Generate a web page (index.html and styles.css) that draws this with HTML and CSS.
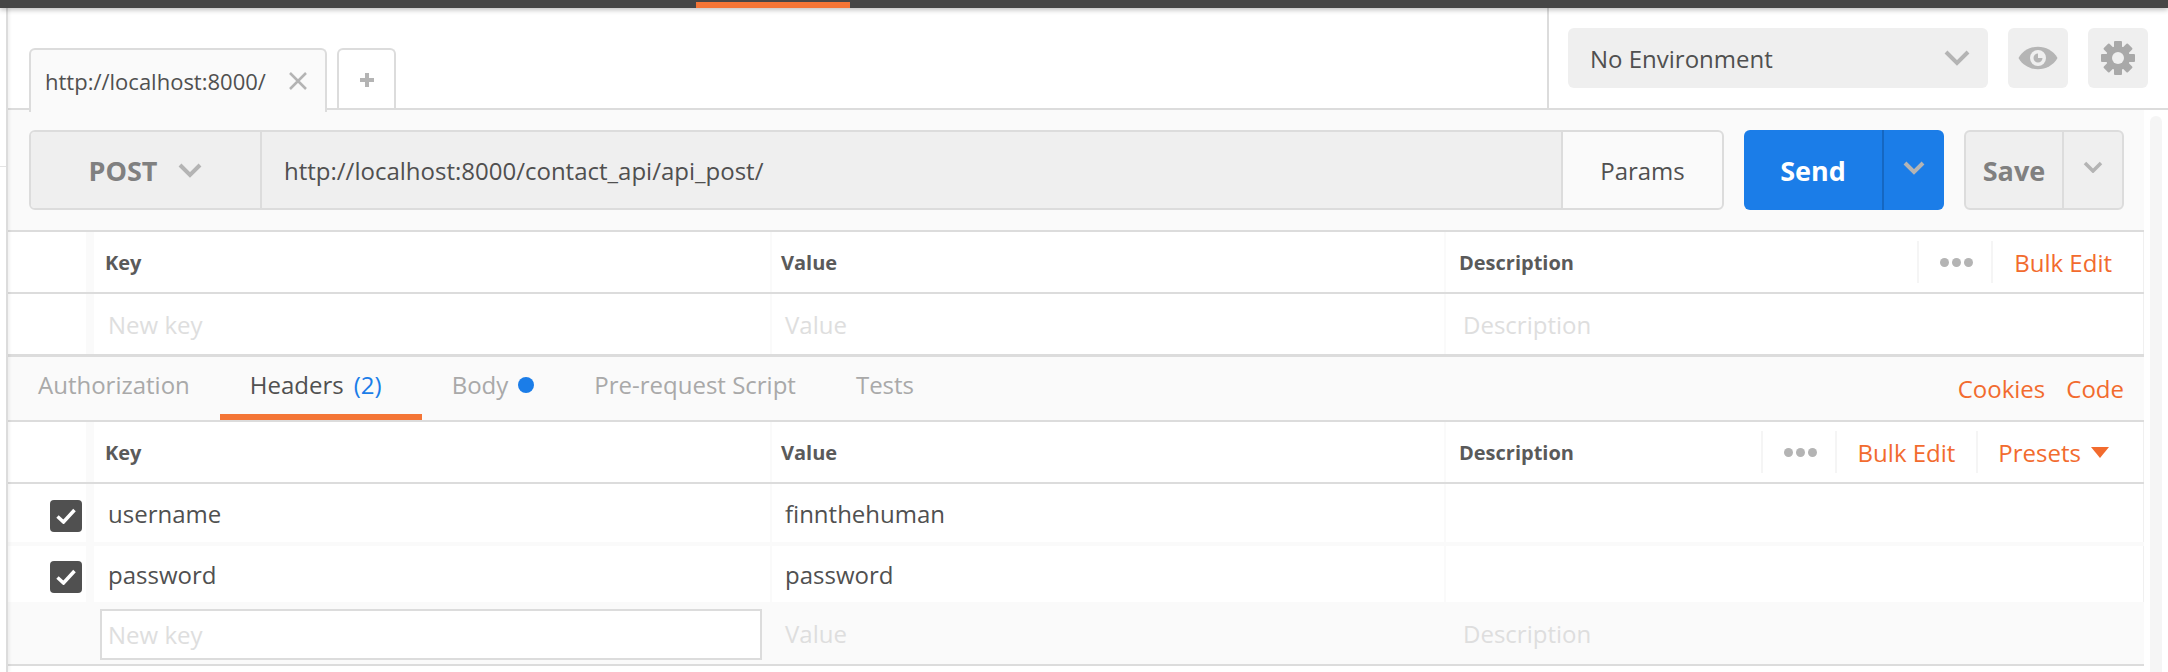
FILE: index.html
```html
<!DOCTYPE html>
<html lang="en">

<head>
  <meta charset="UTF-8">
  <meta name="viewport" content="width=device-width, initial-scale=1.0">
  <title>Postman - http://localhost:8000/</title>

  <link rel="stylesheet" href="styles.css">
</head>

<body>
  <div class="topbar"><div class="topbar-active"></div></div>

  <div class="app">
    <aside class="sidebar"><div class="sidebar-item"></div></aside>

    <div class="content">
      <header class="tabs-row">
        <div class="tab tab-active">
          <span class="tab-title">http://localhost:8000/</span>
          <svg class="tab-close" width="20" height="18" viewBox="0 0 20 18"><path d="M2 1 18 17M18 1 2 17"/></svg>
        </div>
        <div class="tab tab-add">
          <svg class="tab-plus" width="16" height="16" viewBox="0 0 16 16"><path d="M8 1V15M1 8H15"/></svg>
        </div>

        <div class="env-bar">
          <div class="env-select">
            <span>No Environment</span>
            <svg class="chevron chevron-big" width="26" height="16" viewBox="0 0 26 16"><path d="M2 2 13 13 24 2"/></svg>
          </div>
          <div class="env-btn">
            <svg width="40" height="24" viewBox="0 0 40 24">
              <path class="icon-fill" d="M0.500 12C9 -3 31 -3 39.500 12 31 27 9 27 0.500 12Z"/>
              <circle class="icon-hole" cx="20" cy="12" r="8"/>
              <path class="icon-fill" d="M20 7.500A4.500 4.500 0 1 0 24.500 12H20Z"/>
            </svg>
          </div>
          <div class="env-btn">
            <svg width="36" height="36" viewBox="0 0 36 36">
              <g class="icon-gear">
                <rect x="14" y="1" width="8" height="34" rx="1"/>
                <rect x="14" y="1" width="8" height="34" rx="1" transform="rotate(45 18 18)"/>
                <rect x="14" y="1" width="8" height="34" rx="1" transform="rotate(90 18 18)"/>
                <rect x="14" y="1" width="8" height="34" rx="1" transform="rotate(135 18 18)"/>
              </g>
              <circle class="icon-gear" cx="18" cy="18" r="12"/>
              <circle class="icon-hole" cx="18" cy="18" r="6"/>
            </svg>
          </div>
        </div>
      </header>

      <div class="workspace">
        <main class="main">
          <section class="request-bar">
            <div class="request-group">
              <div class="method">
                <span>POST</span>
                <svg class="chevron" width="24" height="15" viewBox="0 0 24 15"><path d="M2 2 12 12 22 2"/></svg>
              </div>
              <div class="url">http://localhost:8000/contact_api/api_post/</div>
              <div class="params">Params</div>
            </div>
            <div class="send">
              <span class="send-label">Send</span>
              <span class="send-arrow"><svg class="chevron" width="22" height="14" viewBox="0 0 22 14"><path d="M2 2 11 11 20 2"/></svg></span>
            </div>
            <div class="save">
              <span class="save-label">Save</span>
              <span class="save-arrow"><svg class="chevron chevron-thin" width="20" height="12" viewBox="0 0 20 12"><path d="M2 2 10 10 18 2"/></svg></span>
            </div>
          </section>

          <section class="kv-table">
            <div class="kv-row kv-head">
              <div class="cell cell-check"></div>
              <div class="cell cell-key">Key</div>
              <div class="cell cell-value">Value</div>
              <div class="cell cell-desc">
                <span>Description</span>
                <div class="head-actions">
                  <div class="head-action head-dots"><i></i><i></i><i></i></div>
                  <div class="head-action link">Bulk Edit</div>
                </div>
              </div>
            </div>
            <div class="kv-row kv-new-row">
              <div class="cell cell-check"></div>
              <div class="cell cell-key placeholder">New key</div>
              <div class="cell cell-value placeholder">Value</div>
              <div class="cell cell-desc placeholder">Description</div>
            </div>
          </section>

          <nav class="sub-tabs">
            <div class="sub-tab">Authorization</div>
            <div class="sub-tab sub-tab-active">Headers <span class="count">(2)</span></div>
            <div class="sub-tab sub-tab-body">Body <span class="dot"></span></div>
            <div class="sub-tab">Pre-request Script</div>
            <div class="sub-tab">Tests</div>
            <div class="sub-links">
              <span class="link">Cookies</span>
              <span class="link">Code</span>
            </div>
          </nav>

          <section class="kv-table">
            <div class="kv-row kv-head">
              <div class="cell cell-check"></div>
              <div class="cell cell-key">Key</div>
              <div class="cell cell-value">Value</div>
              <div class="cell cell-desc">
                <span>Description</span>
                <div class="head-actions head-actions-wide">
                  <div class="head-action head-dots"><i></i><i></i><i></i></div>
                  <div class="head-action link">Bulk Edit</div>
                  <div class="head-action link">Presets <span class="caret"></span></div>
                </div>
              </div>
            </div>
            <div class="kv-row kv-data">
              <div class="cell cell-check"><span class="check"><svg width="20" height="16" viewBox="0 0 20 16"><path d="M1.500 8.500 7.500 14 18.500 2"/></svg></span></div>
              <div class="cell cell-key">username</div>
              <div class="cell cell-value">finnthehuman</div>
              <div class="cell cell-desc"></div>
            </div>
            <div class="kv-row kv-data">
              <div class="cell cell-check"><span class="check"><svg width="20" height="16" viewBox="0 0 20 16"><path d="M1.500 8.500 7.500 14 18.500 2"/></svg></span></div>
              <div class="cell cell-key">password</div>
              <div class="cell cell-value">password</div>
              <div class="cell cell-desc"></div>
            </div>
            <div class="kv-row kv-focus">
              <div class="cell cell-check"></div>
              <div class="cell cell-key placeholder"><div class="key-input">New key</div></div>
              <div class="cell cell-value placeholder">Value</div>
              <div class="cell cell-desc placeholder">Description</div>
            </div>
          </section>
        </main>

        <div class="gutter"><div class="scrollbar"></div></div>
      </div>
    </div>
  </div>
</body>

</html>
```

FILE: styles.css
```css
* {
  box-sizing: border-box;
}

html,body {
  margin: 0;
  height: 672px;
  overflow: hidden;
}

body {
  background-color: #fff;
  color: #505050;
  font-family: "Open Sans", "Liberation Sans", sans-serif;
  font-size: 24px;
}

.topbar {
  position: relative;
  z-index: 2;
  height: 8px;
  padding: 2px 0 0 696px;
  background-color: #464646;
  box-shadow: 0 2px 5px rgba(0,0,0,0.25);
}

.topbar-active {
  width: 154px;
  height: 6px;
  background-color: #f47536;
}

.app {
  display: flex;
  height: 664px;
}

.sidebar {
  position: relative;
  z-index: 1;
  width: 8px;
  border-right: 2px solid #dcdcdc;
  box-shadow: 2px 0 3px rgba(0,0,0,0.05);
  flex-shrink: 0;
}

.sidebar-item {
  height: 159px;
  border-bottom: 1px solid #e4e4e4;
}

.content {
  flex: 1;
  min-width: 0;
}

.tabs-row {
  display: flex;
  height: 102px;
  padding-left: 21px;
  border-bottom: 2px solid #dcdcdc;
}

.tab {
  display: flex;
  align-items: center;
  height: 62px;
  margin-top: 40px;
  border: 2px solid #dcdcdc;
  border-bottom: 0;
  border-radius: 6px 6px 0 0;
}

.tab-active {
  width: 298px;
  padding: 0 17px 0 14px;
  background-color: #fafafa;
  position: relative;
  z-index: 1;
  justify-content: space-between;
  height: 64px;
  font-size: 22px;
}

.tab-add {
  width: 59px;
  margin-left: 10px;
  justify-content: center;
}

.tab-close path {
  fill: none;
  stroke: #b4b4b4;
  stroke-width: 2.500;
}

.tab-plus path {
  fill: none;
  stroke: #b4b4b4;
  stroke-width: 4;
}

.env-bar {
  display: flex;
  gap: 20px;
  width: 621px;
  margin-left: auto;
  padding: 20px 0 0 19px;
  border-left: 2px solid #dcdcdc;
}

.env-select {
  display: flex;
  align-items: center;
  justify-content: space-between;
  width: 420px;
  height: 60px;
  padding: 0 18px 0 22px;
  border-radius: 6px;
  background-color: #efefef;
}

.env-btn {
  display: flex;
  align-items: center;
  justify-content: center;
  width: 60px;
  height: 60px;
  border-radius: 6px;
  background-color: #efefef;
}

.icon-fill {
  fill: #b5b5b5;
}

.icon-gear {
  fill: #a9a9a9;
}

.icon-hole {
  fill: #efefef;
}

.chevron path {
  fill: none;
  stroke: #b4b4b4;
  stroke-width: 4;
}

.chevron-thin path {
  stroke-width: 3.500;
}

.workspace {
  display: flex;
  height: 562px;
}

.main {
  width: 2136px;
}

.gutter {
  flex: 1;
  padding: 6px 6px 0;
}

.scrollbar {
  height: 100%;
  border-radius: 6px 6px 0 0;
  background-color: #f5f5f5;
}

/* request bar */

.request-bar {
  display: flex;
  height: 122px;
  padding: 20px 0 0 21px;
  border-bottom: 2px solid #dcdcdc;
  background-color: #fafafa;
}

.request-group {
  display: flex;
  width: 1695px;
  height: 80px;
  border: 2px solid #dcdcdc;
  border-radius: 6px;
  overflow: hidden;
}

.method {
  display: flex;
  align-items: center;
  justify-content: center;
  gap: 21px;
  width: 231px;
  border-right: 2px solid #dcdcdc;
  background-color: #efefef;
  color: #808080;
  font-size: 27px;
  font-weight: 700;
}

.url {
  display: flex;
  align-items: center;
  width: 1299px;
  padding-left: 22px;
  background-color: #efefef;
}

.params {
  display: flex;
  flex: 1;
  align-items: center;
  justify-content: center;
  border-left: 2px solid #dcdcdc;
}

.send {
  display: flex;
  width: 200px;
  height: 80px;
  margin-left: 20px;
  border-radius: 6px;
  background-color: #1b7de8;
  color: #fff;
  font-size: 27px;
  font-weight: 700;
}

.send-label {
  display: flex;
  align-items: center;
  justify-content: center;
  width: 140px;
  border-right: 2px solid #1567c2;
}

.send-arrow {
  display: flex;
  flex: 1;
  align-items: center;
  justify-content: center;
  padding-bottom: 4px;
}

.save {
  display: flex;
  width: 160px;
  height: 80px;
  margin-left: 20px;
  border: 2px solid #dcdcdc;
  border-radius: 6px;
  background-color: #efefef;
  color: #808080;
  font-size: 27px;
  font-weight: 700;
}

.save-label {
  display: flex;
  align-items: center;
  justify-content: center;
  width: 98px;
  border-right: 2px solid #dcdcdc;
}

.save-arrow {
  display: flex;
  flex: 1;
  align-items: center;
  justify-content: center;
  padding-bottom: 6px;
}

/* key value tables */

.kv-row {
  display: flex;
  align-items: stretch;
}

.kv-head {
  height: 62px;
  border-bottom: 2px solid #dcdcdc;
  color: #5a5a5a;
  font-size: 20px;
  font-weight: 700;
}

.kv-new-row {
  height: 63px;
  border-bottom: 3px solid #dcdcdc;
}

.kv-data {
  height: 62px;
  border-bottom: 4px solid #fafafa;
}

.kv-data + .kv-data {
  height: 56px;
  border-bottom: 0;
}

.kv-focus {
  height: 64px;
  border-bottom: 2px solid #dcdcdc;
  background-color: #fafafa;
}

.cell {
  display: flex;
  align-items: center;
}

.cell-check {
  justify-content: flex-start;
  width: 78px;
  padding-left: 42px;
}

.cell-key {
  width: 684px;
  padding-left: 19px;
  border-left: 8px solid #fafafa;
}

.cell-value {
  width: 674px;
  padding-left: 9px;
  border-left: 2px solid #fafafa;
}

.cell-desc {
  flex: 1;
  padding-left: 13px;
  border-left: 2px solid #fafafa;
  border-right: 1px solid #f0f0f0;
}

.kv-new-row .cell-key, .kv-data .cell-key, .kv-focus .cell-key {
  padding-left: 14px;
}

.kv-head .cell-key {
  padding-left: 11px;
}

.kv-new-row .cell-value, .kv-data .cell-value, .kv-focus .cell-value {
  padding-left: 13px;
}

.kv-new-row .cell-desc, .kv-focus .cell-desc {
  padding-left: 17px;
}

.kv-focus .cell {
  border-color: transparent;
}

.kv-focus .cell-key {
  padding-left: 6px;
}

.placeholder {
  color: #dedede;
  font-weight: 400;
}

.key-input {
  display: flex;
  align-items: center;
  width: 662px;
  height: 51px;
  margin-top: 2px;
  padding-left: 6px;
  border: 2px solid #dcdcdc;
  background-color: #fff;
}

.check {
  display: flex;
  align-items: center;
  justify-content: center;
  width: 32px;
  height: 32px;
  margin-top: 5px;
  border-radius: 4px;
  background-color: #505050;
}

.check path {
  fill: none;
  stroke: #fff;
  stroke-width: 3.500;
}

.head-actions {
  display: flex;
  align-items: center;
  height: 42px;
  margin-left: auto;
  margin-right: 31px;
}

.head-actions-wide {
  margin-right: 34px;
}

.head-action {
  display: flex;
  align-items: center;
  height: 100%;
  padding-left: 21px;
  border-left: 2px solid #f5f5f5;
  font-weight: 400;
}

.head-dots {
  gap: 3px;
  width: 74px;
}

.head-dots i {
  width: 9px;
  height: 9px;
  border-radius: 50%;
  background-color: #b4b4b4;
}

.head-action.link {
  padding-right: 21px;
}

.head-action.link:last-child {
  padding-right: 0;
}

.head-actions-wide .head-action:last-child {
  gap: 10px;
  padding-left: 20px;
}

.link {
  color: #f26b2e;
  font-size: 24px;
}

.caret {
  width: 0;
  height: 0;
  border-left: 9px solid transparent;
  border-right: 9px solid transparent;
  border-top: 11px solid #f26b2e;
}

/* request sub tabs */

.sub-tabs {
  display: flex;
  height: 65px;
  border-bottom: 2px solid #dcdcdc;
  background-color: #fafafa;
  color: #a9a9a9;
}

.sub-tab {
  display: flex;
  align-items: center;
  height: 63px;
  padding: 0 30px 8px;
}

.sub-tab-active {
  gap: 10px;
  border-bottom: 6px solid #f47536;
  padding: 0 40px 2px 30px;
  color: #505050;
}

.sub-tab-body {
  gap: 10px;
}

.count {
  color: #1b7de8;
}

.dot {
  width: 16px;
  height: 16px;
  border-radius: 50%;
  background-color: #1b7de8;
}

.sub-links {
  display: flex;
  align-items: center;
  gap: 21px;
  margin-left: auto;
  padding-right: 20px;
}
```
